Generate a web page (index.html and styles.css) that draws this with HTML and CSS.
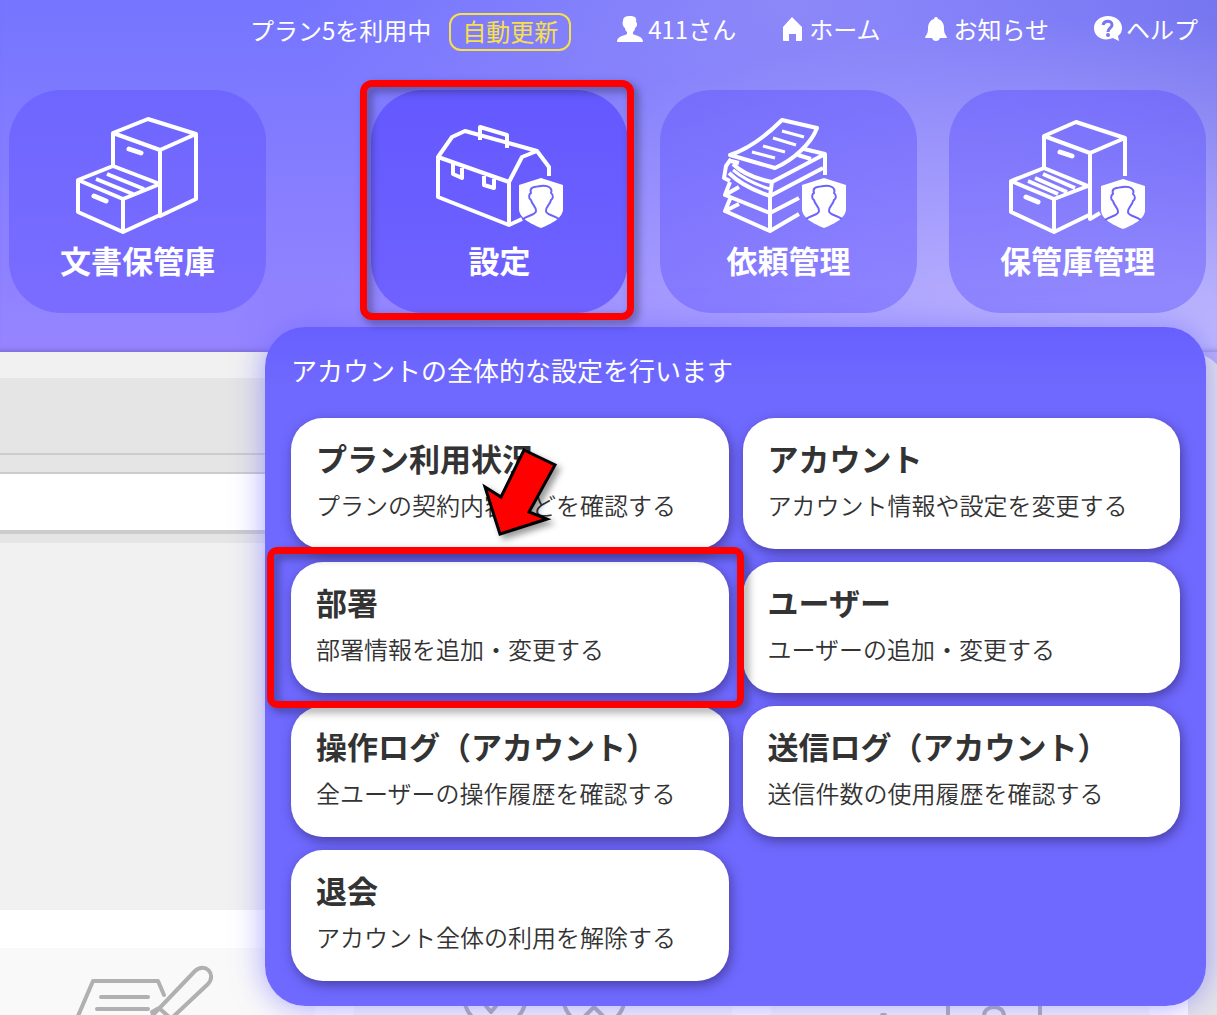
FILE: index.html
```html
<!DOCTYPE html>
<html lang="ja">
<head>
<meta charset="utf-8">
<meta name="viewport" content="width=device-width, initial-scale=1">
<title>設定</title>
<link rel="stylesheet" href="styles.css">
</head>
<body>
<svg class="defs" aria-hidden="true">
  <symbol id="shield" viewBox="0 0 44 50">
    <path fill="#fff" d="M22 0 L44 7 V31 C44 40 32 46 22 50 C12 46 0 40 0 31 V7Z"/>
    <path fill="none" stroke="#6c63fb" stroke-width="2" d="M4 41 C9 37 17 37 17 33 C17 28 13 27 12 22 C9 20 10 16 12 15 C10 9 15 9 22 8 C29 7 34 10 32 15 C35 17 34 21 32 22 C31 27 27 28 27 33 C27 37 35 37 40 41"/>
  </symbol>
</svg>
<div class="page">
  <header class="header">
    <div class="topbar">
      <div class="plan">
        <span>プラン5を利用中</span>
        <a class="badge" href="#renew">自動更新</a>
      </div>
      <a class="toplink" href="#user">
        <svg width="28" height="26" viewBox="0 0 28 26" fill="#fff"><path d="M7 5 C7 1 10 0 14 0 C19 0 21 2 20 6 C22 7 21 11 19 12 C19 14 18 15 17 16 V18 C20 20 27 20 27 26 H1 C1 20 8 20 11 18 V16 C10 15 9 14 9 12 C7 11 6 7 7 5Z"/></svg>
        <span>411さん</span>
      </a>
      <a class="toplink" href="#home">
        <svg width="24" height="26" viewBox="0 0 24 26" fill="#fff"><path d="M11 1 L21 11 V24 Q21 25 20 25 H15 V18 H8 V25 H3 Q2 25 2 24 V11Z"/></svg>
        <span>ホーム</span>
      </a>
      <a class="toplink" href="#news">
        <svg width="24" height="26" viewBox="0 0 24 26" fill="#fff"><path d="M11 1 Q13 1 13 3 C17 4 19 8 19 12 C19 17 20 18 22 21 Q22 22 21 22 H15 Q14 25 11 25 Q8 25 7 22 H1 Q0 22 0 21 C2 18 3 17 3 12 C3 8 5 4 9 3 Q9 1 11 1Z"/></svg>
        <span>お知らせ</span>
      </a>
      <a class="toplink" href="#help">
        <svg width="28" height="26" viewBox="0 0 28 26"><path fill="#fff" d="M14 0 C22 0 28 5 28 12 C28 15 27 18 24 20 L25 25 L19 22 C9 26 0 21 0 12 C0 5 6 0 14 0Z"/><path fill="none" stroke="#7877f2" stroke-width="3" d="M9 9 C10 4 18 4 18 9 C18 12 14 12 14 16"/><circle cx="14" cy="19" r="2" fill="#7877f2"/></svg>
        <span>ヘルプ</span>
      </a>
    </div>

    <nav class="nav">
      <a class="nav-card nav-card-first" href="#storage">
        <svg class="nav-icon" viewBox="0 0 140 120">
          <path d="M45 50V17L80 3L128 18V83L92 100V34L45 17M92 34L128 18M45 50L10 64V96L55 116L92 99M10 64L55 83L92 68L45 50M55 83V116M39 58L76 73M28 63L65 78"/>
          <path class="handle" d="M61 33L73 37M26 80L38 85"/>
        </svg>
        <span>文書保管庫</span>
      </a>
      <a class="nav-card nav-card-active marked" href="#settings">
        <svg class="nav-icon" viewBox="0 0 140 120">
          <path d="M8 41L22 21L35 15L107 35L119 51V60M107 35L92 41L79 66L8 41V81L79 109V66M79 109L92 103M50 24V11L77 19V32M23 48V58L32 62V52M54 60V69L64 72V63"/>
          <use href="#shield" x="89" y="62" width="44" height="50"/>
        </svg>
        <span>設定</span>
      </a>
      <a class="nav-card" href="#requests">
        <svg class="nav-icon" viewBox="0 0 140 120">
          <path d="M63 4L98 12C92 28 74 44 56 52L11 39C32 32 49 18 63 4ZM85 33L106 38V59M79 39L92 43M106 38L53 66L51 80L104 52M12 43L7 50L5 62L11 65M12 45L20 47M14 48C24 58 38 63 53 66M10 57C22 69 36 75 51 80M11 66L6 79L51 97L80 82M51 80V97M6 79L20 71M11 83L6 95L51 115L80 98M51 97V115M6 95L20 88"/>
          <path class="fine" d="M63 15L85 21M54 22L77 29M44 30L66 36M33 36L56 42M14 54C26 64 38 69 51 73"/>
          <use href="#shield" x="83" y="62" width="44" height="50"/>
        </svg>
        <span>依頼管理</span>
      </a>
      <a class="nav-card" href="#storage-admin">
        <svg class="nav-icon" viewBox="0 0 140 120">
          <path d="M36 52V20L68 6L117 22V60M36 20L82 37L117 22M82 37V103L92 97M36 52L3 65V96L46 116L81 99M3 65L46 83L80 70L36 52M46 83V116M35 58L67 72M27 62L59 76M20 65L50 78"/>
          <path class="handle" d="M52 36L64 40M18 81L30 86"/>
          <use href="#shield" x="93" y="63" width="44" height="50"/>
        </svg>
        <span>保管庫管理</span>
      </a>
    </nav>

    <section class="menu">
      <h1>アカウントの全体的な設定を行います</h1>
      <div class="menu-grid">
        <a class="menu-card" href="#plan"><strong>プラン利用状況</strong><span>プランの契約内容などを確認する</span>
          <svg class="arrow" width="84" height="100" viewBox="0 0 84 100" aria-hidden="true"><path d="M44 6L75 21L49 68L67 75L20 90L5 43L21 53Z"/></svg>
        </a>
        <a class="menu-card" href="#account"><strong>アカウント</strong><span>アカウント情報や設定を変更する</span></a>
        <a class="menu-card marked" href="#department"><strong>部署</strong><span>部署情報を追加・変更する</span></a>
        <a class="menu-card" href="#users"><strong>ユーザー</strong><span>ユーザーの追加・変更する</span></a>
        <a class="menu-card" href="#operation-log"><strong>操作ログ（アカウント）</strong><span>全ユーザーの操作履歴を確認する</span></a>
        <a class="menu-card" href="#send-log"><strong>送信ログ（アカウント）</strong><span>送信件数の使用履歴を確認する</span></a>
        <a class="menu-card" href="#withdraw"><strong>退会</strong><span>アカウント全体の利用を解除する</span></a>
      </div>
    </section>
  </header>

  <main class="content">
    <div class="toolbar"></div>
    <div class="subbar"></div>
    <div class="searchbar"></div>
    <div class="list"></div>
    <div class="tiles">
      <div class="tile"><svg width="200" height="59" viewBox="0 0 200 59"><path d="M52 60L67 25H132L138 39M75 41H122M71 53H122M126 60L169 15C179 6 191 18 182 28L148 60M126 56L133 52L142 60"/></svg></div>
      <div class="tile"><svg width="200" height="59" viewBox="0 0 200 59"><path d="M21 40A31 31 0 0 0 83 40M43 50L48 56L53 50M120 40A31 31 0 0 0 182 40M142 60L151 51L160 60"/></svg></div>
      <div class="tile"><svg width="200" height="59" viewBox="0 0 200 59"><path d="M88 60V30H180V60M124 60C124 48 144 48 144 60M22 59H25"/></svg></div>
    </div>
  </main>
</div>
</body>
</html>
```
FILE: styles.css
```css
* { box-sizing: border-box; }

body {
  margin: 0;
  font-family: "Noto Sans CJK JP", "Noto Sans", sans-serif;
  font-size: 24px;
  color: #333;
}

a { color: inherit; text-decoration: none; }

.defs { display: none; }

.page {
  display: flex;
  flex-direction: column;
  min-height: 100vh;
  overflow: hidden;
  background: #b8b1f6;
}

/* Header */
.header {
  position: relative;
  padding: 13px 11px 39px 9px;
  color: #fff;
  background:
    radial-gradient(ellipse 70% 100% at 95% 105%, #c6c0ff 0%, rgba(190, 182, 255, 0.75) 35%, rgba(180, 170, 255, 0) 100%),
    radial-gradient(ellipse 40% 90% at 65% 0%, rgba(146, 141, 247, 0.8), rgba(146, 141, 247, 0)),
    linear-gradient(90deg, rgba(115, 115, 235, 0) 70%, rgba(115, 115, 235, 0.8)),
    linear-gradient(#7575ff, #9685ff);
  box-shadow: inset 0 -6px 6px -6px rgba(60, 50, 120, 0.5);
}

.topbar {
  display: flex;
  justify-content: flex-end;
  align-items: center;
  gap: 45px;
  height: 38px;
  margin-bottom: 39px;
  padding-right: 8px;
  line-height: 34px;
  white-space: nowrap;
}

.plan {
  display: flex;
  align-items: center;
  gap: 18px;
  line-height: 32px;
}

.plan span { padding-bottom: 4px; }

.badge {
  padding: 0 11px 2px;
  border: 2px solid #f8e04a;
  border-radius: 12px;
  color: #f8e04a;
}

.toplink {
  display: flex;
  align-items: center;
  gap: 4px;
  padding-bottom: 6px;
}

.nav { display: flex; gap: 32px; }

.nav-card {
  position: relative;
  flex: 1;
  display: flex;
  flex-direction: column;
  align-items: center;
  gap: 4px;
  padding: 26px 0 33px;
  border-radius: 52px;
  background: rgba(88, 76, 255, 0.4);
  font-size: 31px;
  font-weight: 700;
  line-height: 40px;
}

.nav-card-first { margin-right: 73px; }

.nav-card-active { background: linear-gradient(#6459ff, #7062ff); }

.nav-icon {
  width: 140px;
  height: 120px;
  fill: none;
  stroke: #fff;
  stroke-width: 4;
  stroke-linejoin: round;
}

.nav-icon use { stroke: none; }

.nav-icon .fine { stroke-width: 3; }

.nav-icon .handle { stroke-width: 5; stroke-linecap: round; }

/* Red call-out frames */
.marked::after {
  content: "";
  position: absolute;
  border: 7px solid #f00;
  border-radius: 12px;
  filter: drop-shadow(4px 4px 4px rgba(0, 0, 0, 0.4));
}

.nav-card.marked { z-index: 3; }

.nav-card.marked::after { inset: -10px -6px -7px -11px; }

.menu-card.marked { z-index: 1; }

.menu-card.marked::after { inset: -15px -15px -15px -24px; border-radius: 10px; }

/* Settings menu */
.menu {
  position: absolute;
  z-index: 2;
  top: 327px;
  left: 265px;
  right: 11px;
  padding: 25px 26px;
  border-radius: 40px;
  background: linear-gradient(#6760ff, #6f69ff 60px);
  box-shadow: 0 0 32px rgba(110, 100, 255, 0.6);
}

.menu h1 {
  margin: 0 0 30px;
  font-size: 26px;
  font-weight: 400;
  line-height: 36px;
}

.menu-grid {
  display: grid;
  grid-template-columns: 1fr 1fr;
  gap: 13px 14px;
}

.menu-card {
  position: relative;
  display: flex;
  flex-direction: column;
  gap: 9px;
  padding: 20px 25px 26px;
  border-radius: 32px;
  background: #fff;
  box-shadow: 2px 4px 12px rgba(40, 30, 90, 0.55);
  color: #333;
  line-height: 36px;
  font-weight: 350;
  white-space: nowrap;
}

.menu-card strong { font-size: 31px; font-weight: 700; line-height: 40px; }

.arrow {
  position: absolute;
  z-index: 2;
  top: 26px;
  left: 189px;
  overflow: visible;
  fill: #f00;
  stroke: #000;
  stroke-width: 3;
  filter: drop-shadow(4px 4px 3px rgba(0, 0, 0, 0.4));
}

/* Page behind the menu */
.content {
  flex: 1;
  display: flex;
  flex-direction: column;
  margin-right: -11px;
  padding: 26px 40px 0 0;
  border-radius: 0 40px 0 0;
  background: linear-gradient(90deg, #f1f1f1 50%, #e4e4e8);
  overflow: hidden;
}

.toolbar { height: 77px; background: #e5e5e5; border-bottom: 2px solid #ccc; }

.subbar { height: 19px; background: #e5e5e5; border-bottom: 2px solid #ccc; }

.searchbar {
  height: 60px;
  background: #fff;
  border-bottom: 4px solid #ccc;
}

.list {
  flex: 1;
  min-height: 376px;
  border-top: 9px solid #e5e5e5;
}

.tiles {
  display: grid;
  grid-template-columns: repeat(3, 1fr);
  gap: 39px;
  padding: 38px 39px 0 0;
  margin-left: -63px;
  background: #fff;
}

.tile {
  display: flex;
  justify-content: center;
  padding-top: 8px;
  background: #f9f9f9;
}

.tile svg {
  fill: none;
  stroke: #b0b0b2;
  stroke-width: 4;
  stroke-linejoin: round;
  stroke-linecap: round;
}
```
